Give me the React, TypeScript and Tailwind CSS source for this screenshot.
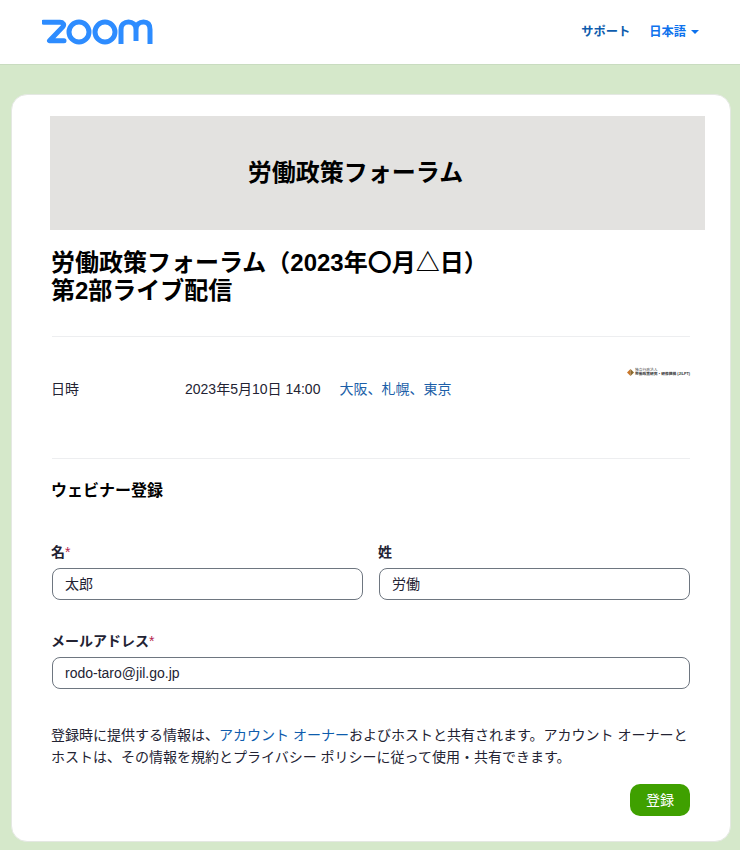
export default function App() {
  return (
    <div className="h-[850px] overflow-hidden bg-[#d5e8ca] font-['Liberation_Sans','Noto_Sans_CJK_JP',sans-serif] text-[#232333]">
      <header className="flex h-[65px] items-center justify-between border-b border-[#c9dcc0] bg-white pl-[42px] pr-[41px]">
        <svg width="111" height="26" viewBox="0 0 111 26" fill="none" className="text-[#2d8cff]" aria-label="zoom">
          <path d="M1.5 3.2H18c3 0 4.6 2.2 3 4.4L7.5 21.8H22" stroke="currentColor" strokeWidth="5" strokeLinejoin="round" strokeLinecap="round" />
          <circle cx="37" cy="13" r="10" stroke="currentColor" strokeWidth="5" />
          <circle cx="63" cy="13" r="10" stroke="currentColor" strokeWidth="5" />
          <path d="M79 25V10.5C79 5.5 82.5 3 86.5 3S94 5.5 94 10.5V22 M94 10.5C94 5.5 97.5 3 101.5 3S108 5.5 108 10.5V25" stroke="currentColor" strokeWidth="5" />
        </svg>
        <nav className="flex items-center gap-[19px] text-[12.25px] font-bold">
          <span className="text-[#0e5cad]">サポート</span>
          <span className="flex items-center gap-[5px] text-[#0e72ed]">
            日本語
            <span className="h-0 w-0 border-x-[4px] border-t-[4px] border-x-transparent border-t-[#0e72ed]" />
          </span>
        </nav>
      </header>
      <main className="ml-[11px] mt-[29px] h-[748px] w-[720px] rounded-[16px] border border-[#e4e8e2] bg-white pl-[38px] pr-[25px] pt-[21px]">
        <div className="flex h-[114px] items-center justify-center bg-[#e3e2e0] pr-[44px] text-[24px] font-bold text-black">労働政策フォーラム</div>
        <div className="pl-[2px] pr-[15px]">
          <h1 className="-ml-[1px] mt-[19px] text-[24px] font-bold leading-[28px] text-black">
            労働政策フォーラム（2023年〇月△日）
            <br />
            第2部ライブ配信
          </h1>
          <div className="mt-[31px] border-t border-[#edeef0]" />
          <div className="relative flex h-[121px] items-start pt-[42px] text-[14px]">
            <span className="-ml-[1px] w-[134px]">日時</span>
            <span>2023年5月10日 14:00</span>
            <span className="ml-[19px] text-[#1c5fa8]">大阪、札幌、東京</span>
            <div className="absolute right-0 top-[31px] flex items-center gap-[1px]">
              <svg width="7" height="7" viewBox="0 0 7 7">
                <path d="M3.5 0 3.5 7 0 3.5Z" fill="#c9772b" />
                <path d="M3.5 0 7 3.5 3.5 7Z" fill="#8a6a2e" />
              </svg>
              <div className="flex flex-col text-[3.75px] leading-[4px] text-[#333]">
                <span>独立行政法人</span>
                <span className="font-bold">労働政策研究・研修機構 (JILPT)</span>
              </div>
            </div>
          </div>
          <div className="border-t border-[#edeef0]" />
          <h2 className="-ml-[1px] mt-[22px] text-[16px] font-bold leading-[20px] text-black">ウェビナー登録</h2>
          <div className="mt-[42px] grid grid-cols-2 gap-x-[16px]">
            <div>
              <label className="-ml-[1px] block text-[14px] font-bold leading-[18px]">名<span className="font-normal text-[#b3234d]">*</span></label>
              <div className="mt-[7px] flex h-[32px] items-center rounded-[8px] border border-[#6e7680] px-[12px] text-[14px]">太郎</div>
            </div>
            <div>
              <label className="-ml-[1px] block text-[14px] font-bold leading-[18px]">姓</label>
              <div className="mt-[7px] flex h-[32px] items-center rounded-[8px] border border-[#6e7680] px-[12px] text-[14px]">労働</div>
            </div>
          </div>
          <label className="-ml-[1px] mt-[32px] block text-[14px] font-bold leading-[18px]">メールアドレス<span className="font-normal text-[#b3234d]">*</span></label>
          <div className="mt-[7px] flex h-[32px] items-center rounded-[8px] border border-[#6e7680] px-[12px] text-[14px]">rodo-taro@jil.go.jp</div>
          <p className="-ml-[1px] mt-[35px] text-[14px] leading-[22px]">
            登録時に提供する情報は、<span className="text-[#0e5cad]">アカウント オーナー</span>およびホストと共有されます。アカウント オーナーとホストは、その情報を規約とプライバシー ポリシーに従って使用・共有できます。
          </p>
          <div className="mt-[16px] flex justify-end">
            <button className="h-[32px] w-[60px] rounded-[10px] bg-[#3fa000] text-[14px] font-normal text-white">登録</button>
          </div>
        </div>
      </main>
    </div>
  );
}
